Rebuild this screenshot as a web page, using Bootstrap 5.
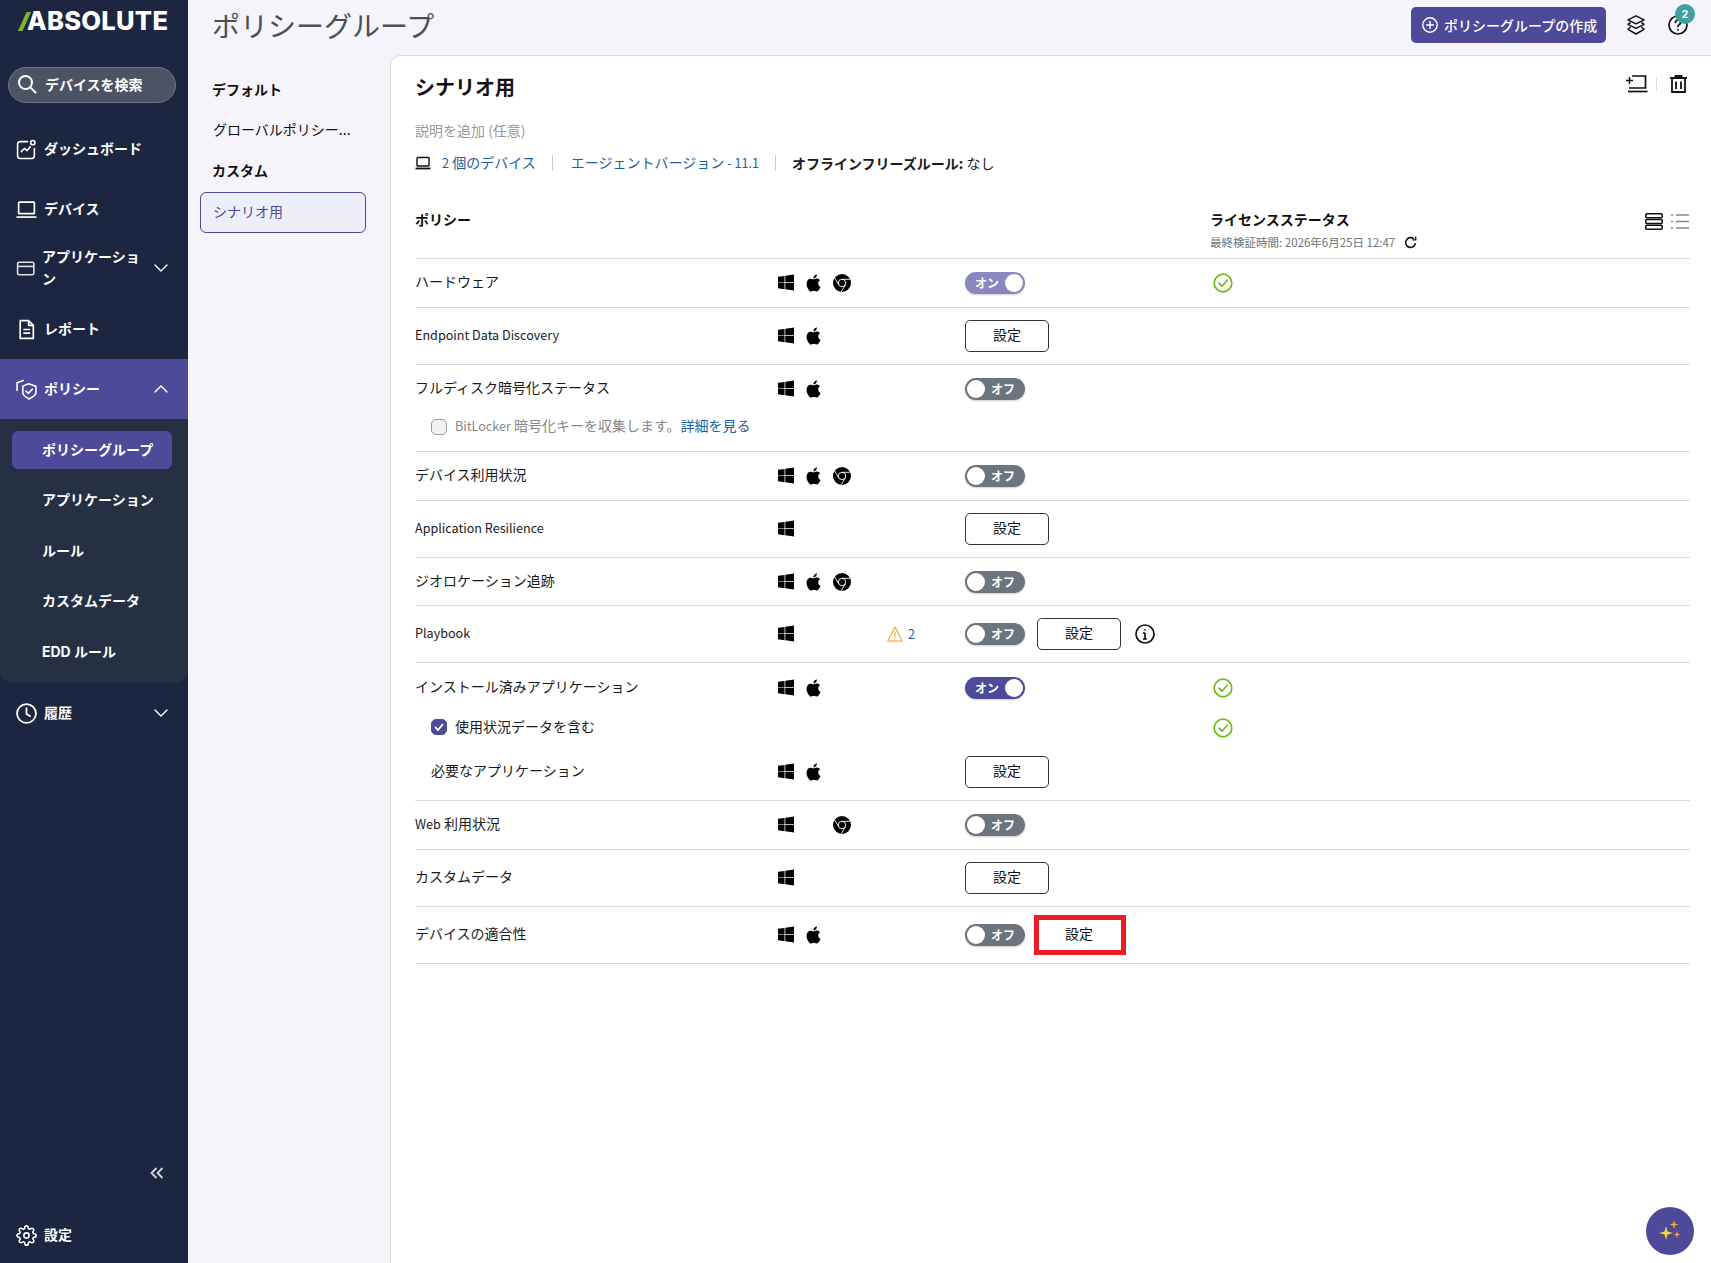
<!DOCTYPE html>
<html lang="ja">
<head>
<meta charset="utf-8">
<title>ポリシーグループ</title>
<link href="https://cdn.jsdelivr.net/npm/bootstrap@5.3.0/dist/css/bootstrap.min.css" rel="stylesheet">
<style>
html,body{height:100%;overflow:hidden}
body{font-family:"Noto Sans CJK JP","Noto Sans",sans-serif;font-size:14px;background:#f4f4fa;color:#1a1a1a}
.shell{height:1263px}
.lat{font-size:12.6px}
.side{width:188px;flex:none;background:#1c2640;color:#fff;font-family:Inter,"Noto Sans CJK JP",sans-serif;font-weight:700}
.brand{height:67px;padding:6px 0 0 18px}
.brand svg{margin:6px -4px 0 0;flex:none}
.brand span{font-family:Inter,sans-serif;font-weight:800;font-size:25.5px;line-height:30px;letter-spacing:.3px}
.finder{height:36px;margin:0 12px 16px 8px;background:#4b5365;border:1px solid #6f7686;border-radius:18px;padding:0 0 2px 8px;gap:8px;font-weight:600}
.mitem{height:60px;padding:0 20px 0 16px;gap:8px;line-height:20px}
.mitem svg.ic{width:21px;height:21px;flex:none}
.mitem .lab{flex:1;margin-left:-1px}
.mitem.on{background:#4d4a9a}
.mitem.foot{padding-top:4px}
.mitem.two{gap:5px;line-height:22px;padding-bottom:2px}
.mitem.two .lab{margin-left:0}
.subm{background:#263043;height:264px;border-radius:0 0 14px 14px;padding:12px 16px 12px 12px}
.subi{height:38px;margin-bottom:12.5px;padding:0 0 2px 30px;border-radius:6px;display:flex;align-items:center}
.subi.on{background:#4d4a9a}
.colps{margin-top:auto;height:30px;padding-right:24px;margin-bottom:15px}
.main{min-width:0}
.topb{height:55px;padding:0 23px 5px 24px}
.topb h1{font-size:28px;font-weight:400;color:#495057;margin:0;line-height:48px;height:48px}
.newbtn{height:36px;width:195px;background:#4d4a9a;color:#fff;border:0;border-radius:5px;padding:0 0 0 11px;gap:6px;font-size:14px;font-weight:500;margin-right:20px}
.toolic{width:20px;height:20px;color:#111}
.helpw{margin-left:22px}
.helpdot{position:absolute;top:-11px;right:-7px;width:20px;height:20px;border-radius:50%;background:#42a0a3;color:#fff;font-size:11px;font-weight:700;display:flex;align-items:center;justify-content:center;font-family:Inter,sans-serif}
.lnav{width:202px;flex:none;padding:14px 24px 0 12px}
.lhead,.llink{padding-left:12px;height:40px;display:flex;align-items:center;color:#111}
.lhead{font-weight:700}
.llink{padding-left:13px;height:41px}
.lsel{height:41px;padding:0 0 2px 12px;display:flex;align-items:center;background:#eeeef8;border:1px solid #4d4a9a;border-radius:6px;color:#4d4a9a;margin-top:2px}
.sheet{flex:1;background:#fff;border:1px solid #ddd;border-right:0;border-bottom:0;border-top-left-radius:10px;padding:19px 21px 0 24px;height:1208px;min-width:0}
.ttl{font-size:20px;font-weight:700;line-height:24px;margin:0;color:#111}
.sheetic{height:24px;padding-right:3px;margin-top:-7px}
.vsep{width:1px;height:12px;background:#ddd;margin:0 13px 0 8px}
.descr{color:#999;line-height:22px;margin-top:20px}
.metar{line-height:22px;margin-top:10px}
.metar a{color:#1e5f9e;text-decoration:none}
.msep{width:1px;height:16px;background:#ccc;margin:0 18px 0 16px}
.msep.nx{margin-right:16px}
.thead{height:85px;border-bottom:1px solid #dcdcdc;padding-top:34px;align-items:flex-start}
.pname{width:363px;flex:none;line-height:21px;padding-bottom:3px}
.pplat{width:109px;flex:none}
.pplat i{width:28px;display:block;flex:none;height:18px}
.pplat svg{width:16px;height:17px;display:block;fill:#000}
.pplat svg.ma{width:17px;height:18px;margin-left:-1px}
.pplat svg.ch{width:18px;height:18px;margin-left:-1px}
.pwarn{width:78px;flex:none;gap:5px;color:#1e5f9e}
.pctl{width:245px;flex:none;gap:12px}
.plic{flex:1}
.rowz{border-bottom:1px solid #dcdcdc;padding:12px 0;align-items:center;min-height:49px;line-height:24px}
.subz{min-height:24px;line-height:24px;align-items:center}
.rowy{border-bottom:1px solid #dcdcdc;padding:12px 0 12px}
.lic{font-weight:700;line-height:22px;color:#111}
.licsub{font-size:11.5px;color:#6c757d;line-height:18px;margin-top:3px;gap:9px}
.swt{width:60px;height:22px;border-radius:11px;position:relative;display:flex;align-items:center;color:#fff;font-size:12px;font-weight:700;box-shadow:0 1px 2px rgba(0,0,0,.2)}
.swt b{position:absolute;top:2px;width:18px;height:18px;background:#fff;border-radius:50%}
.swt.off{background:#6c757d;padding-left:26px}
.swt.off b{left:2px}
.swt.onn{background:#4d4a9a;padding-left:10px}
.swt.dim{background:#8a87bf}
.swt.onn b{right:2px}
.setb{width:84px;height:32px;padding:0 0 4px;font-size:14px;line-height:26px;background:#fff;border:1px solid #333;border-radius:5px;color:#111}
.setb.mark-red{border-color:#fff;border-radius:0;outline:5px solid #ed1c24;outline-offset:-1px;margin-left:1px;padding-right:2px}
.okc{width:20px;height:20px;margin-left:3px;display:block}
.chk{width:16px;height:16px;border:1px solid #999;border-radius:5px;background:#f1f1f1;margin:0 8px 0 16px;flex:none}
.chk.on{background:#4d4a9a;border-color:#4d4a9a;display:flex;align-items:center;justify-content:center}
.grayt{color:#888;line-height:21px;padding-bottom:3px}
.grayt a{color:#1e5f9e;text-decoration:none}
.fab{position:fixed;left:1646px;top:1207px;width:48px;height:48px;border-radius:50%;background:#4d4a9a;display:flex;align-items:center;justify-content:center}
</style>
</head>
<body>
<svg width="0" height="0" class="position-absolute">
<symbol id="win" viewBox="0 0 16 16"><path d="M6.555 1.375 0 2.237v5.45h6.555V1.375zM0 13.795l6.555.933V8.313H0v5.482zm7.278-5.4.026 6.378L16 16V8.395H7.278zM16 0 7.33 1.244v6.414H16V0z"/></symbol>
<symbol id="mac" viewBox="0 0 16 16"><path d="M11.182.008C11.148-.03 9.923.023 8.857 1.18c-1.066 1.156-.902 2.482-.878 2.516.024.034 1.52.087 2.475-1.258.955-1.345.762-2.391.728-2.43Zm3.314 11.733c-.048-.096-2.325-1.234-2.113-3.422.212-2.189 1.675-2.789 1.698-2.854.023-.065-.597-.79-1.254-1.157a3.692 3.692 0 0 0-1.563-.434c-.108-.003-.483-.095-1.254.116-.508.139-1.653.589-1.968.607-.316.018-1.256-.522-2.267-.665-.647-.1-1.333.105-1.824.303-.49.198-1.422.761-2.074 2.244-.652 1.482-.311 3.83-.067 4.56.244.729.625 1.924 1.273 2.796.576.984 1.34 1.667 1.659 1.899.319.232 1.219.386 1.843.067.502-.308 1.408-.485 1.766-.472.357.013 1.061.154 1.782.539.571.197 1.111.115 1.652-.105.541-.221 1.324-1.059 2.238-2.758.347-.79.505-1.217.473-1.282Z"/></symbol>
<symbol id="chr" viewBox="0 0 16 16"><circle cx="8" cy="8" r="8" fill="#000"/><g fill="none" stroke="#fff" stroke-width=".8"><circle cx="8" cy="8" r="3.3"/><path d="M8 4.700h7M5.100 9.600 1.600 3.600M10.900 9.600 7.400 15.800"/></g></symbol>
<symbol id="okc" viewBox="0 0 20 20"><circle cx="10" cy="10" r="8.8" fill="none" stroke="#6fba1c" stroke-width="1.7"/><path d="M6 10.200l3 3 5.200-6" fill="none" stroke="#6fba1c" stroke-width="1.7" stroke-linecap="round" stroke-linejoin="round"/></symbol>
<symbol id="down" viewBox="0 0 14 8"><path d="M1 1l6 6 6-6" fill="none" stroke="#fff" stroke-width="1.4" stroke-linecap="round"/></symbol>
</svg>

<div class="shell d-flex">
  <nav class="side d-flex flex-column">
    <div class="brand d-flex align-items-start">
      <svg width="13" height="19" viewBox="0 0 13 19"><path d="M8.500 0H13L4.500 19H0z" fill="#7ab828"/></svg>
      <span>ABSOLUTE</span>
    </div>
    <div class="finder d-flex align-items-center">
      <svg width="20" height="20" viewBox="0 0 20 20" fill="none" stroke="#fff" stroke-width="2"><circle cx="8.500" cy="8.500" r="6.500"/><path d="M13.500 13.500l5 5" stroke-linecap="round"/></svg>
      <span>デバイスを検索</span>
    </div>
    <div class="mitem d-flex align-items-center">
      <svg class="ic" viewBox="0 0 20 20" fill="none" stroke="#fff" stroke-width="1.500" stroke-linecap="round" stroke-linejoin="round"><path d="M11 2.500H4A2.500 2.500 0 0 0 1.500 5v11A2.500 2.500 0 0 0 4 18.500h11a2.500 2.500 0 0 0 2.500-2.500V9"/><circle cx="16" cy="3.500" r="2"/><path d="M5 12l3-3 2.500 2 3-3.500"/></svg>
      <span class="lab">ダッシュボード</span>
    </div>
    <div class="mitem d-flex align-items-center">
      <svg class="ic" viewBox="0 0 20 20" fill="none" stroke="#fff" stroke-width="1.600"><rect x="2.500" y="3" width="15" height="11" rx="1"/><path d="M0.500 17.200h19"/></svg>
      <span class="lab">デバイス</span>
    </div>
    <div class="mitem two d-flex align-items-center">
      <svg class="ic" viewBox="0 0 20 20" fill="none" stroke="#dfe1e6" stroke-width="1.500"><rect x="1.500" y="4" width="15.500" height="12" rx="1.500"/><path d="M1.500 8h15.500"/></svg>
      <span class="lab">アプリケーション</span>
      <svg width="14" height="8" class="ms-1"><use href="#down"/></svg>
    </div>
    <div class="mitem d-flex align-items-center">
      <svg class="ic" viewBox="0 0 20 20" fill="none" stroke="#fff" stroke-width="1.600" stroke-linejoin="round"><path d="M4 1.500h8l4.500 4.500v12.500H4z"/><path d="M12 1.500V6h4.500M7 10h6.500M7 13.500h6.500"/></svg>
      <span class="lab">レポート</span>
    </div>
    <div class="mitem on d-flex align-items-center">
      <svg class="ic" viewBox="0 0 20 20" fill="none" stroke="#fff" stroke-width="1.500" stroke-linejoin="round" stroke-linecap="round"><path d="M12 4.500l7 2.300v6.400c0 2-3.800 4.400-6.500 5.800-2.700-1.400-6-3.800-6-5.800V6.800z"/><path d="M9.500 11.500l2.200 2.200 3.800-4"/><path d="M7 1.500L1 3.500v7.500"/></svg>
      <span class="lab">ポリシー</span>
      <svg width="14" height="8" style="transform:rotate(180deg)"><use href="#down"/></svg>
    </div>
    <div class="subm">
      <div class="subi on">ポリシーグループ</div>
      <div class="subi">アプリケーション</div>
      <div class="subi">ルール</div>
      <div class="subi">カスタムデータ</div>
      <div class="subi">EDD ルール</div>
    </div>
    <div class="mitem d-flex align-items-center">
      <svg class="ic" viewBox="0 0 20 20" fill="none" stroke="#fff" stroke-width="1.700" stroke-linecap="round"><circle cx="10" cy="10" r="9"/><path d="M10 5v5.500l3.500 2"/></svg>
      <span class="lab">履歴</span>
      <svg width="14" height="8"><use href="#down"/></svg>
    </div>
    <div class="colps d-flex align-items-center justify-content-end">
      <svg width="14" height="12" viewBox="0 0 14 12" fill="none" stroke="#d5d7dc" stroke-width="1.800"><path d="M6.500 1L1.500 6l5 5M12.500 1l-5 5 5 5"/></svg>
    </div>
    <div class="mitem foot d-flex align-items-center">
      <svg class="ic" viewBox="0 0 24 24" fill="none" stroke="#fff" stroke-width="1.800"><circle cx="12" cy="12" r="3"/><path d="M19.400 15a1.650 1.650 0 0 0 .33 1.820l.06.06a2 2 0 0 1 0 2.830 2 2 0 0 1-2.830 0l-.06-.06a1.650 1.650 0 0 0-1.820-.33 1.650 1.650 0 0 0-1 1.510V21a2 2 0 0 1-2 2 2 2 0 0 1-2-2v-.09A1.650 1.650 0 0 0 9 19.400a1.650 1.650 0 0 0-1.820.33l-.06.06a2 2 0 0 1-2.830 0 2 2 0 0 1 0-2.830l.06-.06a1.650 1.650 0 0 0 .33-1.820 1.650 1.650 0 0 0-1.510-1H3a2 2 0 0 1-2-2 2 2 0 0 1 2-2h.09A1.650 1.650 0 0 0 4.600 9a1.650 1.650 0 0 0-.33-1.820l-.06-.06a2 2 0 0 1 0-2.830 2 2 0 0 1 2.830 0l.06.06a1.650 1.650 0 0 0 1.820.33H9a1.650 1.650 0 0 0 1-1.510V3a2 2 0 0 1 2-2 2 2 0 0 1 2 2v.09a1.650 1.650 0 0 0 1 1.510 1.650 1.650 0 0 0 1.820-.33l.06-.06a2 2 0 0 1 2.830 0 2 2 0 0 1 0 2.830l-.06.06a1.650 1.650 0 0 0-.33 1.820V9a1.650 1.650 0 0 0 1.510 1H21a2 2 0 0 1 2 2 2 2 0 0 1-2 2h-.09a1.650 1.650 0 0 0-1.510 1z"/></svg>
      <span class="lab">設定</span>
    </div>
  </nav>

  <div class="main flex-grow-1 d-flex flex-column">
    <header class="topb d-flex align-items-center justify-content-between">
      <h1>ポリシーグループ</h1>
      <div class="d-flex align-items-center">
        <button class="newbtn d-flex align-items-center" type="button">
          <svg width="16" height="16" viewBox="0 0 16 16" fill="none" stroke="#fff" stroke-width="1.400"><circle cx="8" cy="8" r="7.200"/><path d="M8 4v8M4 8h8"/></svg>
          <span>ポリシーグループの作成</span>
        </button>
        <svg class="toolic" viewBox="0 0 20 20" fill="none" stroke="#111" stroke-width="1.500" stroke-linejoin="round"><path d="M10 .8l8 4-8 4-8-4z"/><path d="M4.500 7.300L2 9.300l8 4 8-4-2.500-2"/><path d="M4.500 12L2 14.300l8 4.700 8-4.700-2.500-2.300"/></svg>
        <div class="helpw position-relative">
          <svg class="toolic d-block" viewBox="0 0 20 20" fill="none" stroke="#111" stroke-width="1.700" stroke-linecap="round"><circle cx="10" cy="10" r="9"/><path d="M7.500 7.500a2.500 2.500 0 1 1 3.600 2.200c-.8.400-1.100 1-1.100 1.800"/><path d="M10 14.600v.2"/></svg>
          <span class="helpdot">2</span>
        </div>
      </div>
    </header>
    <div class="d-flex flex-grow-1">
      <aside class="lnav">
        <div class="lhead">デフォルト</div>
        <div class="llink">グローバルポリシー...</div>
        <div class="lhead">カスタム</div>
        <div class="lsel">シナリオ用</div>
      </aside>
      <section class="sheet">
        <div class="d-flex justify-content-between align-items-center">
          <h2 class="ttl">シナリオ用</h2>
          <div class="sheetic d-flex align-items-center">
            <svg width="22" height="19" viewBox="0 0 22 19" fill="none" stroke="#111" stroke-width="1.700"><path d="M6 2h13.500v12H3"/><path d="M2 17.500h19.500"/><path d="M0 6.500h7M3.500 3v7" stroke-width="1.500"/></svg>
            <span class="vsep"></span>
            <svg width="17" height="18" viewBox="0 0 17 18" fill="none" stroke="#111" stroke-width="1.800"><path d="M0 3h17M5.500 3V1h6v2M2 3v14h13V3M6 6.500v7.500M11 6.500v7.500"/></svg>
          </div>
        </div>
        <div class="descr">説明を追加 (任意)</div>
        <div class="metar d-flex align-items-center">
          <svg width="16" height="14" viewBox="0 0 16 14" fill="none" stroke="#111" stroke-width="1.400" style="margin-right:11px"><rect x="2" y="1.500" width="12" height="8.500" rx=".5"/><path d="M.5 12.500h15" stroke-width="1.800"/></svg>
          <a href="#"><span class="lat">2</span> 個のデバイス</a><span class="msep"></span>
          <a href="#">エージェントバージョン <span class="lat">- 11.1</span></a><span class="msep nx"></span>
          <span><b>オフラインフリーズルール:</b> なし</span>
        </div>

        <div class="thead d-flex">
          <div class="lic" style="width:795px">ポリシー</div>
          <div class="flex-grow-1">
            <div class="lic">ライセンスステータス</div>
            <div class="licsub d-flex align-items-center"><span>最終検証時間: 2026年6月25日 12:47</span>
              <svg width="13" height="13" viewBox="0 0 12 12" fill="none" stroke="#111" stroke-width="1.500"><path d="M10.500 6.500A4.500 4.500 0 1 1 9 2.600"/><path d="M10.800 0.600v3H7.800" stroke-width="1.300"/></svg>
            </div>
          </div>
          <div class="d-flex gap-2" style="margin-top:5px;margin-right:1px">
            <svg width="18" height="17" viewBox="0 0 18 17" fill="none" stroke="#111" stroke-width="1.600"><rect x=".8" y=".8" width="16.400" height="4" rx="1"/><rect x=".8" y="6.500" width="16.400" height="4" rx="1"/><rect x=".8" y="12.200" width="16.400" height="4" rx="1"/></svg>
            <svg width="18" height="17" viewBox="0 0 18 17" fill="none" stroke="#888" stroke-width="1.400"><path d="M5 2h13M5 8.500h13M5 15h13M0 2h2M0 8.500h2M0 15h2"/></svg>
          </div>
        </div>

        <div class="rowz d-flex">
          <div class="pname">ハードウェア</div>
          <div class="pplat d-flex align-items-center"><i><svg><use href="#win"/></svg></i><i><svg class="ma"><use href="#mac"/></svg></i><i><svg class="ch"><use href="#chr"/></svg></i></div>
          <div class="pwarn"></div>
          <div class="pctl d-flex align-items-center"><span class="swt onn dim">オン<b></b></span></div>
          <div class="plic"><svg class="okc"><use href="#okc"/></svg></div>
        </div>
        <div class="rowz d-flex">
          <div class="pname lat">Endpoint Data Discovery</div>
          <div class="pplat d-flex align-items-center"><i><svg><use href="#win"/></svg></i><i><svg class="ma"><use href="#mac"/></svg></i></div>
          <div class="pwarn"></div>
          <div class="pctl d-flex align-items-center"><button class="setb" type="button">設定</button></div>
        </div>
        <div class="rowy">
          <div class="subz d-flex">
            <div class="pname">フルディスク暗号化ステータス</div>
            <div class="pplat d-flex align-items-center"><i><svg><use href="#win"/></svg></i><i><svg class="ma"><use href="#mac"/></svg></i></div>
            <div class="pwarn"></div>
            <div class="pctl d-flex align-items-center"><span class="swt off"><b></b>オフ</span></div>
          </div>
          <div class="subz d-flex" style="margin-top:14px"><span class="chk"></span><span class="grayt"><span class="lat">BitLocker</span> 暗号化キーを収集します。<a href="#">詳細を見る</a></span></div>
        </div>
        <div class="rowz d-flex">
          <div class="pname">デバイス利用状況</div>
          <div class="pplat d-flex align-items-center"><i><svg><use href="#win"/></svg></i><i><svg class="ma"><use href="#mac"/></svg></i><i><svg class="ch"><use href="#chr"/></svg></i></div>
          <div class="pwarn"></div>
          <div class="pctl d-flex align-items-center"><span class="swt off"><b></b>オフ</span></div>
        </div>
        <div class="rowz d-flex">
          <div class="pname lat">Application Resilience</div>
          <div class="pplat d-flex align-items-center"><i><svg><use href="#win"/></svg></i></div>
          <div class="pwarn"></div>
          <div class="pctl d-flex align-items-center"><button class="setb" type="button">設定</button></div>
        </div>
        <div class="rowz d-flex" style="padding-bottom:11px;min-height:48px">
          <div class="pname">ジオロケーション追跡</div>
          <div class="pplat d-flex align-items-center"><i><svg><use href="#win"/></svg></i><i><svg class="ma"><use href="#mac"/></svg></i><i><svg class="ch"><use href="#chr"/></svg></i></div>
          <div class="pwarn"></div>
          <div class="pctl d-flex align-items-center"><span class="swt off"><b></b>オフ</span></div>
        </div>
        <div class="rowz d-flex">
          <div class="pname lat">Playbook</div>
          <div class="pplat d-flex align-items-center"><i><svg><use href="#win"/></svg></i></div>
          <div class="pwarn d-flex align-items-center">
            <svg width="16" height="16" viewBox="0 0 16 16" fill="none" stroke="#f0a030" stroke-width="1.100" stroke-linejoin="round"><path d="M8 1L.7 15h14.600z"/><path d="M8 6v5M8 12.300v.9"/></svg><span class="lat">2</span>
          </div>
          <div class="pctl d-flex align-items-center"><span class="swt off"><b></b>オフ</span><button class="setb" type="button">設定</button>
            <svg width="20" height="20" viewBox="0 0 20 20" fill="none" stroke="#111" stroke-width="1.700" style="margin-left:2px"><circle cx="10" cy="10" r="9"/><path d="M10 9v6M8 9h2M8 15h4M10 5.200v1.200"/></svg>
          </div>
        </div>
        <div class="rowy" style="padding-top:13px">
          <div class="subz d-flex">
            <div class="pname">インストール済みアプリケーション</div>
            <div class="pplat d-flex align-items-center"><i><svg><use href="#win"/></svg></i><i><svg class="ma"><use href="#mac"/></svg></i></div>
            <div class="pwarn"></div>
            <div class="pctl d-flex align-items-center"><span class="swt onn">オン<b></b></span></div>
            <div class="plic"><svg class="okc"><use href="#okc"/></svg></div>
          </div>
          <div class="subz d-flex" style="margin-top:16px">
            <div class="pname d-flex align-items-center"><span class="chk on"><svg width="10" height="8" viewBox="0 0 10 8" fill="none" stroke="#fff" stroke-width="1.800"><path d="M1 4l3 3 5-6"/></svg></span><span>使用状況データを含む</span></div>
            <div class="pplat"></div><div class="pwarn"></div><div class="pctl"></div>
            <div class="plic"><svg class="okc"><use href="#okc"/></svg></div>
          </div>
          <div class="subz d-flex" style="margin-top:16px">
            <div class="pname" style="padding-left:16px">必要なアプリケーション</div>
            <div class="pplat d-flex align-items-center"><i><svg><use href="#win"/></svg></i><i><svg class="ma"><use href="#mac"/></svg></i></div>
            <div class="pwarn"></div>
            <div class="pctl d-flex align-items-center"><button class="setb" type="button">設定</button></div>
          </div>
        </div>
        <div class="rowz d-flex">
          <div class="pname"><span class="lat">Web</span> 利用状況</div>
          <div class="pplat d-flex align-items-center"><i><svg><use href="#win"/></svg></i><i></i><i><svg class="ch"><use href="#chr"/></svg></i></div>
          <div class="pwarn"></div>
          <div class="pctl d-flex align-items-center"><span class="swt off"><b></b>オフ</span></div>
        </div>
        <div class="rowz d-flex">
          <div class="pname">カスタムデータ</div>
          <div class="pplat d-flex align-items-center"><i><svg><use href="#win"/></svg></i></div>
          <div class="pwarn"></div>
          <div class="pctl d-flex align-items-center"><button class="setb" type="button">設定</button></div>
        </div>
        <div class="rowz d-flex">
          <div class="pname">デバイスの適合性</div>
          <div class="pplat d-flex align-items-center"><i><svg><use href="#win"/></svg></i><i><svg class="ma"><use href="#mac"/></svg></i></div>
          <div class="pwarn"></div>
          <div class="pctl d-flex align-items-center"><span class="swt off"><b></b>オフ</span><button class="setb mark-red" type="button">設定</button></div>
        </div>
      </section>
    </div>
  </div>
</div>
<div class="fab">
  <svg width="26" height="26" viewBox="0 0 26 26"><path d="M9 8l1.500 5.500L16 15l-5.500 1.500L9 22l-1.500-5.500L2 15l5.500-1.500z" fill="#fdd835"/><path d="M17 2l1 3.500 3.500 1-3.500 1L17 11l-1-3.500-3.500-1 3.500-1z" fill="#ffa726"/><path d="M20 13l.8 2.700 2.700.8-2.700.8L20 20l-.8-2.700-2.700-.8 2.700-.8z" fill="#ffa726"/></svg>
</div>
<script src="https://cdn.jsdelivr.net/npm/bootstrap@5.3.0/dist/js/bootstrap.bundle.min.js"></script>
</body>
</html>
